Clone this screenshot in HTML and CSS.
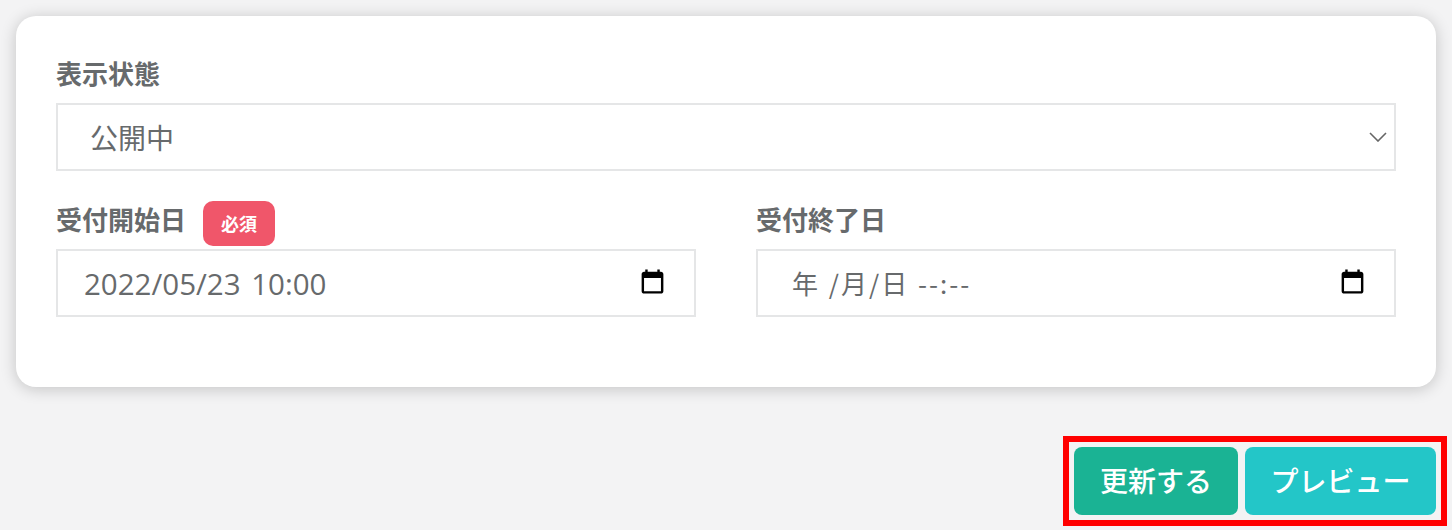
FILE: index.html
```html
<!DOCTYPE html>
<html lang="ja">
<head>
    <meta charset="UTF-8">
    <title>受付設定</title>
    <link rel="stylesheet" href="styles.css">
</head>
<body>
    <div class="card">
        <div class="form-group">
            <div class="label-row">
                <label class="label">表示状態</label>
            </div>
            <div class="field select-field">
                <span class="select-value">公開中</span>
                <svg class="chevron" width="18" height="10" viewBox="0 0 18 10">
                    <path d="M1 1l8 8 8-8" fill="none" stroke="#666" stroke-width="1.6"/>
                </svg>
            </div>
        </div>
        <div class="date-row">
            <div class="form-group">
                <div class="label-row">
                    <label class="label">受付開始日</label>
                    <span class="badge">必須</span>
                </div>
                <div class="field date-field">
                    <span class="date-value">2022/05/23 10:00</span>
                    <svg class="calendar" width="29" height="29" viewBox="0 0 24 24">
                        <path d="M19 4h-1V2h-2v2H8V2H6v2H5c-1.1 0-2 .9-2 2v14c0 1.1.9 2 2 2h14c1.1 0 2-.9 2-2V6c0-1.1-.9-2-2-2zm0 16H5V9h14v11z"/>
                    </svg>
                </div>
            </div>
            <div class="form-group">
                <div class="label-row">
                    <label class="label">受付終了日</label>
                </div>
                <div class="field date-field">
                    <span class="date-value placeholder">年 /月/日 --:--</span>
                    <svg class="calendar" width="29" height="29" viewBox="0 0 24 24">
                        <path d="M19 4h-1V2h-2v2H8V2H6v2H5c-1.1 0-2 .9-2 2v14c0 1.1.9 2 2 2h14c1.1 0 2-.9 2-2V6c0-1.1-.9-2-2-2zm0 16H5V9h14v11z"/>
                    </svg>
                </div>
            </div>
        </div>
    </div>
    <div class="actions-row">
        <div class="actions">
            <button class="button update">更新する</button>
            <button class="button preview">プレビュー</button>
        </div>
    </div>
</body>
</html>
```

FILE: styles.css
```css
body {
    margin: 0;
    padding: 16px 5px 0 16px;
    background-color: #f3f3f4;
    font-family: "Noto Sans CJK JP", "Open Sans", sans-serif;
    color: #676a6c;
}

.card {
    width: 1420px;
    height: 371px;
    box-sizing: border-box;
    padding: 40px 40px 0;
    background-color: #fff;
    border-radius: 20px;
    box-shadow: 0 2px 16px rgba(0, 0, 0, 0.2);
}

.form-group {
    flex: 1;
}

.label-row {
    display: flex;
    align-items: flex-start;
    gap: 17px;
    height: 47px;
}

.label {
    font-size: 26px;
    font-weight: 700;
    line-height: 34px;
}

.field {
    display: flex;
    align-items: center;
    height: 68px;
    box-sizing: border-box;
    background-color: #fff;
    border: 2px solid #e5e6e7;
    font-size: 28px;
}

.select-field {
    padding: 0 2px 0 32px;
    justify-content: space-between;
}

.select-value {
    line-height: 1;
}

.chevron {
    margin-right: 5px;
}

.date-row {
    display: flex;
    gap: 60px;
    margin-top: 30px;
}

.date-row .label-row {
    height: 48px;
}

.date-row .label {
    line-height: 36px;
}

.date-field {
    justify-content: space-between;
    padding: 0 27px 0 26px;
}

.calendar {
    margin-bottom: 4px;
}

.date-value {
    font-family: "Open Sans", "Noto Sans CJK JP", sans-serif;
    font-size: 29.5px;
    word-spacing: 3px;
}

.placeholder {
    margin: 0 0 2px 8px;
    font-family: "Noto Sans CJK JP", "Open Sans", sans-serif;
    font-size: 26px;
    letter-spacing: 2px;
    word-spacing: 1px;
}

.badge {
    width: 72px;
    height: 45px;
    line-height: 45px;
    text-align: center;
    background-color: #f0566a;
    border-radius: 10px;
    color: #fff;
    font-size: 18px;
    font-weight: 700;
}

.actions-row {
    display: flex;
    justify-content: flex-end;
    margin-top: 49px;
}

.actions {
    display: flex;
    gap: 7px;
    padding: 5px;
    border: 6px solid #f00;
}

.button {
    height: 68px;
    padding: 0 0 2px;
    border: none;
    border-radius: 8px;
    color: #fff;
    font-family: "Noto Sans CJK JP", sans-serif;
    font-size: 28px;
    font-weight: 500;
    cursor: pointer;
}

.update {
    width: 164px;
    background-color: #1ab394;
}

.preview {
    width: 191px;
    background-color: #23c6c8;
}
```
